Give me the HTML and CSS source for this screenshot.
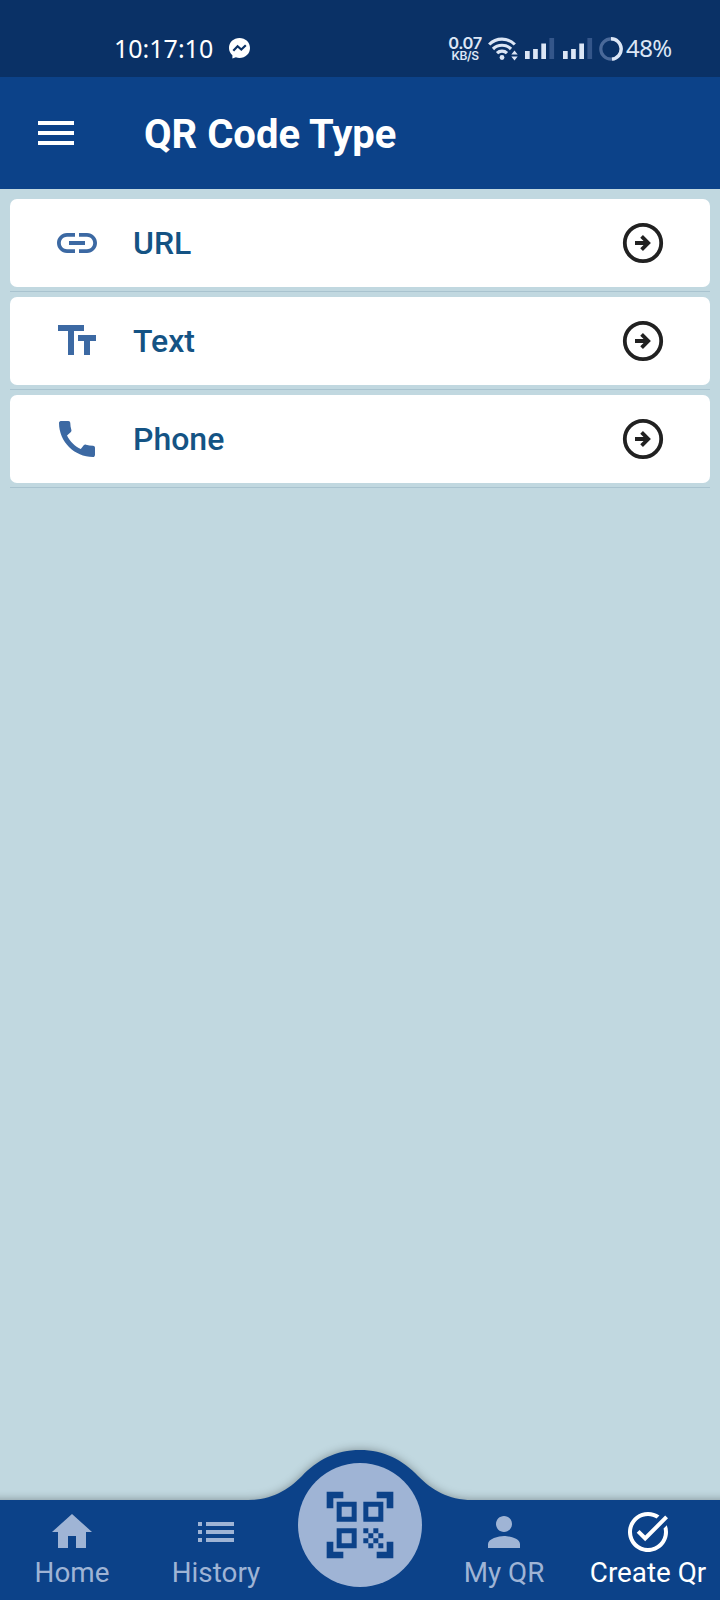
FILE: index.html
```html
<!DOCTYPE html>
<html lang="en">
  <head>
    <meta charset="UTF-8" />
    <meta name="viewport" content="width=device-width, initial-scale=1.0" />
    <title>QR Code Type</title>
    <link rel="stylesheet" href="styles.css" />
  </head>
  <body>
    <div class="app">
      <div class="status-bar">
        <span class="clock">10:17:10</span>
        <svg class="messenger" width="21" height="21" viewBox="0 0 21 21">
          <path fill="#fff" d="M10.500 0C4.600 0 0 4.300 0 10c0 3 1.300 5.500 3.400 7.300V20.500l3.500-1.200c1.100.400 2.300.600 3.600.600C16.400 19.900 21 15.700 21 10S16.400 0 10.500 0z" />
          <path fill="none" stroke="#0a3166" stroke-width="2.200" d="M4.300 12.800l4.300-4.600 3.700 3.300 4.500-4.200" />
        </svg>
        <div class="status-right">
          <div class="speed">
            <span class="speed-value">0.07</span>
            <span class="speed-unit">KB/S</span>
          </div>
          <svg class="wifi" width="30" height="24" viewBox="0 0 30 24">
            <g fill="none" stroke="#dce6f5" stroke-width="3.200">
              <path d="M1.200 7.500a18 18 0 0 1 25.600 0" />
              <path d="M5 12a12.700 12.700 0 0 1 18 0" />
              <path d="M9 16.200a7.200 7.200 0 0 1 10 0" />
            </g>
            <circle cx="14" cy="20.500" r="2.400" fill="#dce6f5" />
            <path fill="#dce6f5" d="M26.500 13.500l3.200 4h-6.400zM26.500 23.500l3.200-4h-6.400z" />
          </svg>
          <svg class="signal" width="30" height="21" viewBox="0 0 30 21">
            <path fill="#dce6f5" d="M0 13h4.700v8H0zM8.100 11h4.700v10H8.100zM16.300 5.500H21V21h-4.700z" />
            <path fill="#34568a" d="M24.400 0h4.700v21h-4.700z" />
          </svg>
          <svg class="signal" width="30" height="21" viewBox="0 0 30 21">
            <path fill="#dce6f5" d="M0 13h4.700v8H0zM8.100 11h4.700v10H8.100zM16.300 5.500H21V21h-4.700z" />
            <path fill="#34568a" d="M24.400 0h4.700v21h-4.700z" />
          </svg>
          <svg class="battery" width="24" height="24" viewBox="0 0 24 24">
            <circle cx="12" cy="12" r="10.200" fill="none" stroke="#4a6999" stroke-width="3.200" />
            <path d="M12 1.800a10.200 10.200 0 0 1 1 20.350" fill="none" stroke="#dce6f5" stroke-width="3.400" />
          </svg>
          <span class="percent">48%</span>
        </div>
      </div>

      <header class="toolbar">
        <svg class="icon" viewBox="0 0 24 24">
          <path d="M3 18h18v-2H3v2zm0-5h18v-2H3v2zm0-7v2h18V6H3z" />
        </svg>
        <h1>QR Code Type</h1>
      </header>

      <main class="content">
        <ul class="type-list">
          <li class="type-row">
            <a class="card">
              <svg class="icon" viewBox="0 0 24 24">
                <path d="M3.900 12c0-1.710 1.390-3.100 3.100-3.100h4V7H7c-2.760 0-5 2.240-5 5s2.240 5 5 5h4v-1.900H7c-1.710 0-3.100-1.390-3.100-3.100zM8 13h8v-2H8v2zm9-6h-4v1.900h4c1.710 0 3.100 1.390 3.100 3.100s-1.390 3.100-3.100 3.100h-4V17h4c2.760 0 5-2.240 5-5s-2.240-5-5-5z" />
              </svg>
              <span class="label">URL</span>
              <svg class="arrow" viewBox="0 0 24 24">
                <circle cx="12" cy="12" r="9.100" />
                <path d="M8 12h6.500M11.300 8.700l3.300 3.300-3.300 3.300" />
              </svg>
            </a>
          </li>
          <li class="type-row">
            <a class="card">
              <svg class="icon" viewBox="0 0 24 24">
                <path d="M2.500 4v3h5v12h3V7h5V4h-13zm19 5h-9v3h3v7h3v-7h3V9z" />
              </svg>
              <span class="label">Text</span>
              <svg class="arrow" viewBox="0 0 24 24">
                <circle cx="12" cy="12" r="9.100" />
                <path d="M8 12h6.500M11.300 8.700l3.300 3.300-3.300 3.300" />
              </svg>
            </a>
          </li>
          <li class="type-row">
            <a class="card">
              <svg class="icon" viewBox="0 0 24 24">
                <path d="M20.010 15.380c-1.230 0-2.420-.200-3.530-.560-.350-.120-.740-.030-1.010.240l-1.570 1.970c-2.830-1.350-5.480-3.900-6.890-6.830l1.950-1.660c.270-.280.350-.670.240-1.020-.370-1.110-.560-2.300-.560-3.530 0-.540-.450-.990-.990-.990H4.190C3.650 3 3 3.240 3 3.990 3 13.280 10.730 21 20.010 21c.710 0 .990-.630.990-1.180v-3.450c0-.540-.450-.990-.990-.990z" />
              </svg>
              <span class="label">Phone</span>
              <svg class="arrow" viewBox="0 0 24 24">
                <circle cx="12" cy="12" r="9.100" />
                <path d="M8 12h6.500M11.300 8.700l3.300 3.300-3.300 3.300" />
              </svg>
            </a>
          </li>
        </ul>
      </main>

      <nav class="bottom-nav">
        <svg class="nav-shape" width="720" height="150" viewBox="0 0 720 150">
          <path d="M-20 50H248C272 50 288 40 302 26C317 10 336 0 360 0S403 10 418 26C432 40 448 50 472 50H740V170H-20z" />
        </svg>
        <a class="nav-item">
          <svg class="icon" viewBox="0 0 24 24">
            <path d="M10 20v-6h4v6h5v-8h3L12 3 2 12h3v8z" />
          </svg>
          <span>Home</span>
        </a>
        <a class="nav-item">
          <svg class="icon" viewBox="0 0 24 24">
            <path d="M3 13h2v-2H3v2zm0 4h2v-2H3v2zm0-8h2V7H3v2zm4 4h14v-2H7v2zm0 4h14v-2H7v2zM7 7v2h14V7H7z" />
          </svg>
          <span>History</span>
        </a>
        <a class="scan">
          <svg width="80" height="80" viewBox="0 0 24 24">
            <path d="M9.500 6.500v3h-3v-3h3M11 5H5v6h6V5zm-1.500 9.500v3h-3v-3h3M11 13H5v6h6v-6zm6.500-6.500v3h-3v-3h3M19 5h-6v6h6V5zm-6 8h1.500v1.500H13V13zm1.500 1.500H16V16h-1.500v-1.500zM16 13h1.500v1.500H16V13zm-3 3h1.500v1.500H13V16zm1.500 1.500H16V19h-1.500v-1.500zM16 16h1.500v1.500H16V16zm1.500-1.500H19V16h-1.500v-1.500zm0 3H19V19h-1.500v-1.500zM22 7h-2V4h-3V2h5v5zm0 15v-5h-2v3h-3v2h5zM2 22h5v-2H4v-3H2v5zM2 2v5h2V4h3V2H2z" />
          </svg>
        </a>
        <a class="nav-item">
          <svg class="icon" viewBox="0 0 24 24">
            <path d="M12 12c2.210 0 4-1.790 4-4s-1.790-4-4-4-4 1.790-4 4 1.790 4 4 4zm0 2c-2.670 0-8 1.340-8 4v2h16v-2c0-2.660-5.330-4-8-4z" />
          </svg>
          <span>My QR</span>
        </a>
        <a class="nav-item active">
          <svg class="icon" viewBox="0 0 24 24">
            <path d="M22 5.180L10.590 16.600l-4.240-4.240 1.410-1.410 2.830 2.830 10-10L22 5.180zm-2.210 5.040c.130.570.210 1.170.210 1.780 0 4.420-3.580 8-8 8s-8-3.580-8-8 3.580-8 8-8c1.580 0 3.040.460 4.280 1.250l1.440-1.440C16.100 2.670 14.130 2 12 2 6.480 2 2 6.480 2 12s4.480 10 10 10 10-4.480 10-10c0-1.190-.220-2.330-.600-3.390l-1.610 1.610z" />
          </svg>
          <span>Create Qr</span>
        </a>
      </nav>
    </div>
  </body>
</html>
```
FILE: styles.css
```css
* {
  box-sizing: border-box;
}
body {
  margin: 0;
  font-family: Roboto, sans-serif;
}
svg {
  display: block;
  flex-shrink: 0;
}
.app {
  display: flex;
  flex-direction: column;
  width: 720px;
  height: 1600px;
  overflow: hidden;
  background-color: #c1d8e0;
}
.icon {
  width: 48px;
  height: 48px;
  fill: currentColor;
}

/* Status bar */
.status-bar {
  display: flex;
  align-items: center;
  height: 77px;
  padding: 20px 49px 0 114px;
  background-color: #0a3166;
  color: #fff;
  font-family: "Noto Sans", sans-serif;
}
.clock {
  width: 99px;
  padding-bottom: 2px;
  font-size: 25px;
  line-height: 28px;
  white-space: nowrap;
}
.messenger {
  margin-left: 16px;
}
.status-right {
  display: flex;
  align-items: center;
  margin-left: auto;
  color: #dce6f5;
}
.speed {
  display: flex;
  flex-direction: column;
  align-items: center;
  width: 34px;
  font-family: Inter, sans-serif;
  font-weight: 600;
}
.speed-value {
  font-size: 16.5px;
  line-height: 14px;
  letter-spacing: -0.4px;
}
.speed-unit {
  font-size: 12px;
  line-height: 12px;
  letter-spacing: -0.4px;
}
.wifi {
  margin-left: 6px;
}
.signal {
  margin-left: 7px;
}
.signal + .signal {
  margin-left: 8px;
}
.battery {
  margin-left: 6px;
}
.percent {
  width: 45px;
  margin-left: 3px;
  padding-bottom: 1px;
  font-size: 24px;
  line-height: 28px;
  letter-spacing: -0.6px;
  white-space: nowrap;
}

/* Toolbar */
.toolbar {
  display: flex;
  align-items: center;
  gap: 64px;
  height: 112px;
  padding: 0 32px;
  background-color: #0c4289;
  color: #fff;
}
.toolbar h1 {
  margin: 0;
  padding-top: 2px;
  font-size: 40px;
  font-weight: 700;
}

/* QR types */
.content {
  flex: 1;
  padding: 10px;
}
.type-list {
  margin: 0;
  padding: 0;
  list-style: none;
}
.type-row {
  height: 98px;
}
.type-row::after {
  content: "";
  display: block;
  height: 1px;
  margin-top: 4px;
  background-color: #a9c3cf;
}
.card {
  display: flex;
  align-items: center;
  height: 88px;
  padding: 0 43px;
  border-radius: 7px;
  background-color: #fff;
  color: #3c69a3;
}
.label {
  margin-left: 32px;
  padding-bottom: 1px;
  color: #145384;
  font-size: 32px;
  font-weight: 500;
}
.arrow {
  width: 48px;
  height: 48px;
  margin-left: auto;
  fill: none;
  stroke: #212121;
  stroke-width: 1.9;
}

/* Bottom navigation */
.bottom-nav {
  position: relative;
  display: grid;
  grid-template-columns: repeat(5, 144px);
  height: 100px;
  color: #9fb4d5;
}
.nav-shape {
  position: absolute;
  left: 0;
  bottom: 0;
  overflow: visible;
  fill: #0c4289;
  filter: drop-shadow(0 0 5px rgba(0, 0, 0, 0.35));
}
.nav-item {
  position: relative;
  display: flex;
  flex-direction: column;
  align-items: center;
  padding-top: 8px;
  font-size: 27.8px;
  line-height: 34px;
  white-space: nowrap;
}
.nav-item.active {
  color: #fff;
}
.scan {
  position: relative;
  display: flex;
  align-items: center;
  justify-content: center;
  justify-self: center;
  width: 124px;
  height: 124px;
  margin-top: -37px;
  border-radius: 50%;
  background-color: #9fb4d5;
  fill: #0c4289;
}
```
